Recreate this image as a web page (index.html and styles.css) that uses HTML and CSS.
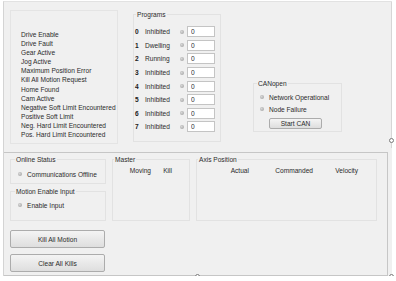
FILE: index.html
```html
<!DOCTYPE html>
<html lang="en">
<head>
    <meta charset="UTF-8">
    <meta name="viewport" content="width=device-width, initial-scale=1.0">
    <title>Motion Status</title>
    <link rel="stylesheet" href="styles.css">
</head>
<body>
    <div class="form">
        <div class="top-panel">
            <div class="status-box">
                <div>Drive Enable</div>
                <div>Drive Fault</div>
                <div>Gear Active</div>
                <div>Jog Active</div>
                <div>Maximum Position Error</div>
                <div>Kill All Motion Request</div>
                <div>Home Found</div>
                <div>Cam Active</div>
                <div>Negative Soft Limit Encountered</div>
                <div>Positive Soft Limit</div>
                <div>Neg. Hard Limit Encountered</div>
                <div>Pos. Hard Limit Encountered</div>
            </div>

            <fieldset class="group programs">
                <legend>Programs</legend>
                <div class="prog-row"><b>0</b><span>Inhibited</span><i class="led"></i><input type="text" value="0"></div>
                <div class="prog-row"><b>1</b><span>Dwelling</span><i class="led"></i><input type="text" value="0"></div>
                <div class="prog-row"><b>2</b><span>Running</span><i class="led"></i><input type="text" value="0"></div>
                <div class="prog-row"><b>3</b><span>Inhibited</span><i class="led"></i><input type="text" value="0"></div>
                <div class="prog-row"><b>4</b><span>Inhibited</span><i class="led"></i><input type="text" value="0"></div>
                <div class="prog-row"><b>5</b><span>Inhibited</span><i class="led"></i><input type="text" value="0"></div>
                <div class="prog-row"><b>6</b><span>Inhibited</span><i class="led"></i><input type="text" value="0"></div>
                <div class="prog-row"><b>7</b><span>Inhibited</span><i class="led"></i><input type="text" value="0"></div>
            </fieldset>

            <fieldset class="group canopen">
                <legend>CANopen</legend>
                <div class="led-row"><i class="led"></i>Network Operational</div>
                <div class="led-row"><i class="led"></i>Node Failure</div>
                <button class="btn btn-can">Start CAN</button>
            </fieldset>
        </div>

        <div class="bottom-panel">
            <div class="left-col">
                <fieldset class="group online">
                    <legend>Online Status</legend>
                    <div class="led-row"><i class="led"></i>Communications Offline</div>
                </fieldset>
                <fieldset class="group enable">
                    <legend>Motion Enable Input</legend>
                    <div class="led-row"><i class="led"></i>Enable Input</div>
                </fieldset>
                <button class="btn btn-big">Kill All Motion</button>
                <button class="btn btn-big">Clear All Kills</button>
            </div>

            <fieldset class="group master">
                <legend>Master</legend>
                <div class="cols master-cols"><span>Moving</span><span>Kill</span></div>
            </fieldset>

            <fieldset class="group axis">
                <legend>Axis Position</legend>
                <div class="cols axis-cols"><span>Actual</span><span>Commanded</span><span>Velocity</span></div>
            </fieldset>
        </div>

        <!-- designer resize handles -->
        <span class="handle h-right"></span>
        <span class="handle h-bottom"></span>
        <span class="handle h-corner"></span>
    </div>
</body>
</html>
```

FILE: styles.css
```css
/* Stil general */
body {
    margin: 0;
    background-color: #ffffff;
    font-family: "Liberation Sans", Arial, sans-serif;
    font-size: 6.6px;
    color: #2b2b2b;
}

.form {
    position: relative;
    margin: 1px 0 0 3px;
    width: 389px;
    height: 275px;
    background-color: #f0f0f0;
    border-left: 1px solid #d4d4d4;
    border-top: 1px solid #e2e2e2;
    box-sizing: border-box;
}

/* Panou de sus */
.top-panel {
    display: flex;
    align-items: flex-start;
    height: 146px;
    padding: 8px 0 0 6px;
    border-right: 1px solid #d6d6d6;
    box-sizing: border-box;
}

.status-box {
    width: 108px;
    height: 134px;
    padding: 19px 0 0 10px;
    border: 1px solid #e4e4e4;
    box-sizing: border-box;
    line-height: 9.1px;
    white-space: nowrap;
}

/* Group box */
.group {
    margin: 0;
    padding: 0;
    border: 1px solid #e2e2e2;
    box-sizing: border-box;
    min-width: 0;
    white-space: nowrap;
}

.group legend {
    padding: 0 1px;
    margin-left: 1px;
    line-height: 9px;
}

.programs {
    width: 88px;
    height: 132px;
    margin-left: 15px;
    padding: 6px 0 0 1px;
}

.prog-row {
    display: grid;
    grid-template-columns: 10px 31px 11px 28px;
    align-items: center;
    height: 13.6px;
}

.prog-row b {
    font-weight: bold;
    color: #1a1a1a;
}

.prog-row input {
    width: 28px;
    height: 11px;
    margin: 0;
    padding: 0 0 0 3px;
    border: 1px solid #c4c4c4;
    background-color: #ffffff;
    font-family: inherit;
    font-size: 6.6px;
    color: #2b2b2b;
    box-sizing: border-box;
}

.led {
    display: inline-block;
    width: 4px;
    height: 4px;
    border-radius: 50%;
    background: radial-gradient(circle at 40% 40%, #d8d8d8, #9a9a9a);
}

.prog-row .led {
    margin-left: 4px;
}

.led-row {
    display: flex;
    align-items: center;
    gap: 5px;
    height: 12px;
    padding-left: 4px;
}

.canopen {
    width: 89px;
    height: 53px;
    margin: 69px 0 0 32px;
    padding: 3px 0 0 2px;
}

/* Butoane */
.btn {
    display: block;
    border: 1px solid #acacac;
    border-radius: 2px;
    background: linear-gradient(#f4f4f4, #dedede);
    font-family: inherit;
    font-size: 6.6px;
    color: #2b2b2b;
    padding: 0;
    box-sizing: border-box;
}

.btn-can {
    width: 53px;
    height: 11px;
    margin: 3px 0 0 13px;
}

.btn-big {
    width: 95px;
    height: 18px;
    margin-top: 6px;
}

/* Panou de jos */
.bottom-panel {
    display: flex;
    align-items: flex-start;
    gap: 6px;
    width: 384px;
    height: 124px;
    margin-top: 4px;
    padding: 2px 0 0 6px;
    border: 1px solid #c6c6c6;
    border-left: none;
    box-sizing: border-box;
}

.left-col {
    width: 96px;
}

.online {
    height: 29px;
    padding: 4px 0 0 3px;
}

.enable {
    height: 34px;
    margin-top: 3px;
    padding: 3px 0 0 3px;
}

.left-col .btn-big:first-of-type {
    margin-top: 9px;
}

.master {
    width: 78px;
    height: 66px;
}

.axis {
    width: 181px;
    height: 66px;
}

.cols {
    display: grid;
    justify-items: end;
    padding-top: 3px;
}

.master-cols {
    grid-template-columns: 38px 21px;
}

.axis-cols {
    grid-template-columns: 52px 64px 45px;
}

/* Manere de redimensionare */
.handle {
    position: absolute;
    width: 3px;
    height: 3px;
    border: 1px solid #7a7a7a;
    border-radius: 50%;
    background-color: #ffffff;
}

.h-right { left: 385px; top: 136px; }
.h-bottom { left: 191px; top: 272px; }
.h-corner { left: 385px; top: 272px; }
```
